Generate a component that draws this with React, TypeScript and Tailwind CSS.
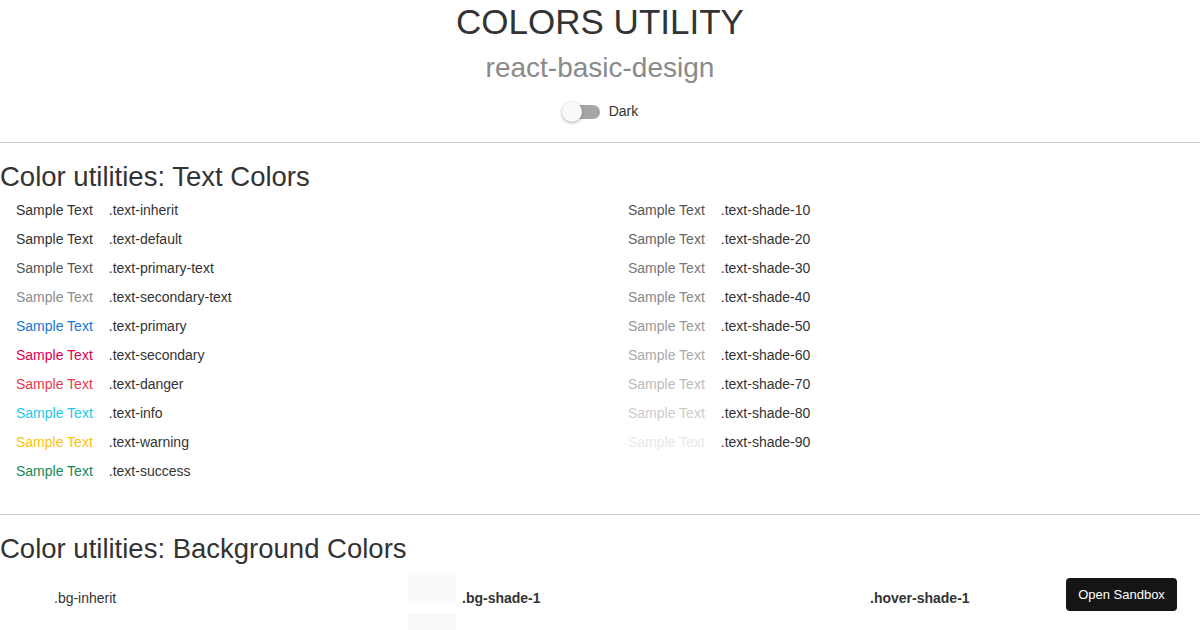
const textColors: [string, string][] = [
  ['.text-inherit', 'text-[#333333]'],
  ['.text-default', 'text-[#333333]'],
  ['.text-primary-text', 'text-[#555555]'],
  ['.text-secondary-text', 'text-[#8c8c8c]'],
  ['.text-primary', 'text-[#1976d2]'],
  ['.text-secondary', 'text-[#dc004e]'],
  ['.text-danger', 'text-[#e8384f]'],
  ['.text-info', 'text-[#1ec8e6]'],
  ['.text-warning', 'text-[#ffc107]'],
  ['.text-success', 'text-[#198754]'],
];

const shadeColors: [string, string][] = [
  ['.text-shade-10', 'text-[#555555]'],
  ['.text-shade-20', 'text-[#666666]'],
  ['.text-shade-30', 'text-[#777777]'],
  ['.text-shade-40', 'text-[#888888]'],
  ['.text-shade-50', 'text-[#999999]'],
  ['.text-shade-60', 'text-[#aaaaaa]'],
  ['.text-shade-70', 'text-[#bbbbbb]'],
  ['.text-shade-80', 'text-[#cccccc]'],
  ['.text-shade-90', 'text-[#e8e8e8]'],
];

const bgShades: [string, string][] = [
  ['.bg-shade-1', 'bg-[#fafafa]'],
  ['.bg-shade-2', 'bg-[#f9f9f9]'],
  ['.bg-shade-3', 'bg-[#f2f2f2]'],
  ['.bg-shade-4', 'bg-[#ececec]'],
];

function SampleRow({ label, color }: { label: string; color: string }) {
  return (
    <div className="flex pl-4 text-[14px] leading-[29px]">
      <span className={`mr-4 ${color}`}>Sample Text</span>
      <span className="text-[#333333]">{label}</span>
    </div>
  );
}

function BgRow({ label, box, bold = true }: { label: string; box: string; bold?: boolean }) {
  return (
    <div className="mb-1 flex items-baseline">
      <div className={`h-[30px] w-12 shrink-0 ${box}`} />
      <span className={`ml-1.5 text-[14px] text-[#333333] ${bold ? 'font-bold' : ''}`}>{label}</span>
    </div>
  );
}

export default function App() {
  return (
    <div className="min-h-[630px] bg-white font-['Liberation_Sans',Arial,sans-serif] text-[#333333]">
      <header className="flex flex-col items-center pt-px">
        <h1 className="text-[35px] leading-[42px] text-[#333333]">COLORS UTILITY</h1>
        <h2 className="mt-2 text-[28px] leading-[34px] text-[#8a8a8a]">react-basic-design</h2>
        <label className="mt-4 flex items-center gap-[9px]">
          <span className="relative h-5 w-[38px]">
            <span className="absolute left-[3px] top-[3px] h-[14px] w-[35px] rounded-full bg-[#a6a6a6]" />
            <span className="absolute left-0 top-0 h-5 w-5 rounded-full bg-[#fafafa] shadow-[0_1px_3px_rgba(0,0,0,0.35)]" />
          </span>
          <span className="text-[14px] leading-[21px] text-[#333333]">Dark</span>
        </label>
      </header>

      <hr className="mt-[20px] border-t border-[#cccccc]" />

      <section className="mt-[17px]">
        <h2 className="text-[27.5px] leading-[34px] text-[#333333]">Color utilities: Text Colors</h2>
        <div className="mt-[2px] grid grid-cols-[612px_1fr]">
          <div>
            {textColors.map(([label, color]) => (
              <SampleRow key={label} label={label} color={color} />
            ))}
          </div>
          <div>
            {shadeColors.map(([label, color]) => (
              <SampleRow key={label} label={label} color={color} />
            ))}
          </div>
        </div>
      </section>

      <hr className="mt-[28px] border-t border-[#cccccc]" />

      <section className="mt-[17px]">
        <h2 className="text-[27.5px] leading-[34px] text-[#333333]">Color utilities: Background Colors</h2>
        <div className="mt-[7px] grid grid-cols-[408px_408px_1fr]">
          <div>
            <BgRow label=".bg-inherit" box="bg-inherit" bold={false} />
          </div>
          <div>
            {bgShades.map(([label, box]) => (
              <BgRow key={label} label={label} box={box} />
            ))}
          </div>
          <div>
            {bgShades.map(([label], i) => (
              <BgRow key={label} label={`.hover-shade-${i + 1}`} box="bg-transparent" />
            ))}
          </div>
        </div>
      </section>

      <button
        type="button"
        className="fixed bottom-[19px] right-[23px] h-[33px] w-[111px] rounded-[4px] bg-[#151515] text-[13px] text-white"
      >
        Open Sandbox
      </button>
    </div>
  );
}
